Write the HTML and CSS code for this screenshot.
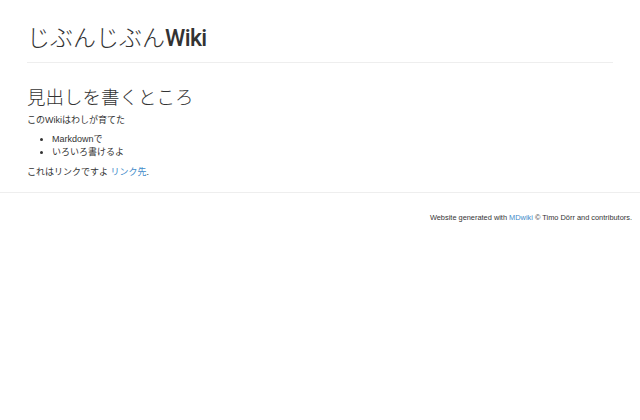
FILE: index.html
```html
<!DOCTYPE html>
<html lang="ja">
<head>
  <meta charset="UTF-8">
  <meta name="viewport" content="width=device-width, initial-scale=1.0">
  <title>じぶんじぶんWiki</title>
  <link rel="stylesheet" href="styles.css">
</head>
<body>
  <div class="page">
    <div class="page-header">
      <h1 class="site-title">じぶんじぶん<span class="latin">Wiki</span></h1>
    </div>

    <div class="content">
      <h1>見出しを書くところ</h1>
      <p>このWikiはわしが育てた</p>
      <ul>
        <li>Markdownで</li>
        <li>いろいろ書けるよ</li>
      </ul>
      <p>これはリンクですよ <a href="#">リンク先</a>.</p>
    </div>
  </div>

  <div class="footer">
    Website generated with <a href="#">MDwiki</a> &copy; Timo Dörr and contributors.
  </div>
</body>
</html>
```

FILE: styles.css
```css
* {
  box-sizing: border-box;
}

body {
  margin: 0;
  font-family: "Liberation Sans", "Noto Sans CJK JP", sans-serif;
  font-size: 9px;
  line-height: 13px;
  color: #333;
  background-color: #fff;
}

a {
  color: #428bca;
  text-decoration: none;
}

.page {
  padding: 0 27px;
}

.page-header {
  padding: 24px 0 11px;
  border-bottom: 1px solid #eee;
}

.site-title {
  margin: 0;
  font-size: 23px;
  line-height: 25px;
  font-weight: 300;
  font-family: "Noto Sans CJK JP", sans-serif;
}

.site-title .latin {
  font-family: Roboto, "Liberation Sans", sans-serif;
  font-weight: 500;
  letter-spacing: -0.6px;
}

.content {
  padding-bottom: 13px;
}

.content h1 {
  margin: 23px 0 8px;
  font-size: 18.5px;
  line-height: 20px;
  font-weight: 300;
  font-family: "Noto Sans CJK JP", sans-serif;
}

.content p {
  margin: 0 0 6px;
}

.content p:last-child {
  margin-bottom: 0;
}

.content ul {
  margin: 0 0 7px;
  padding-left: 25px;
}

.footer {
  border-top: 1px solid #eee;
  padding: 18px 8px 0 0;
  text-align: right;
  font-size: 7.4px;
}
```
